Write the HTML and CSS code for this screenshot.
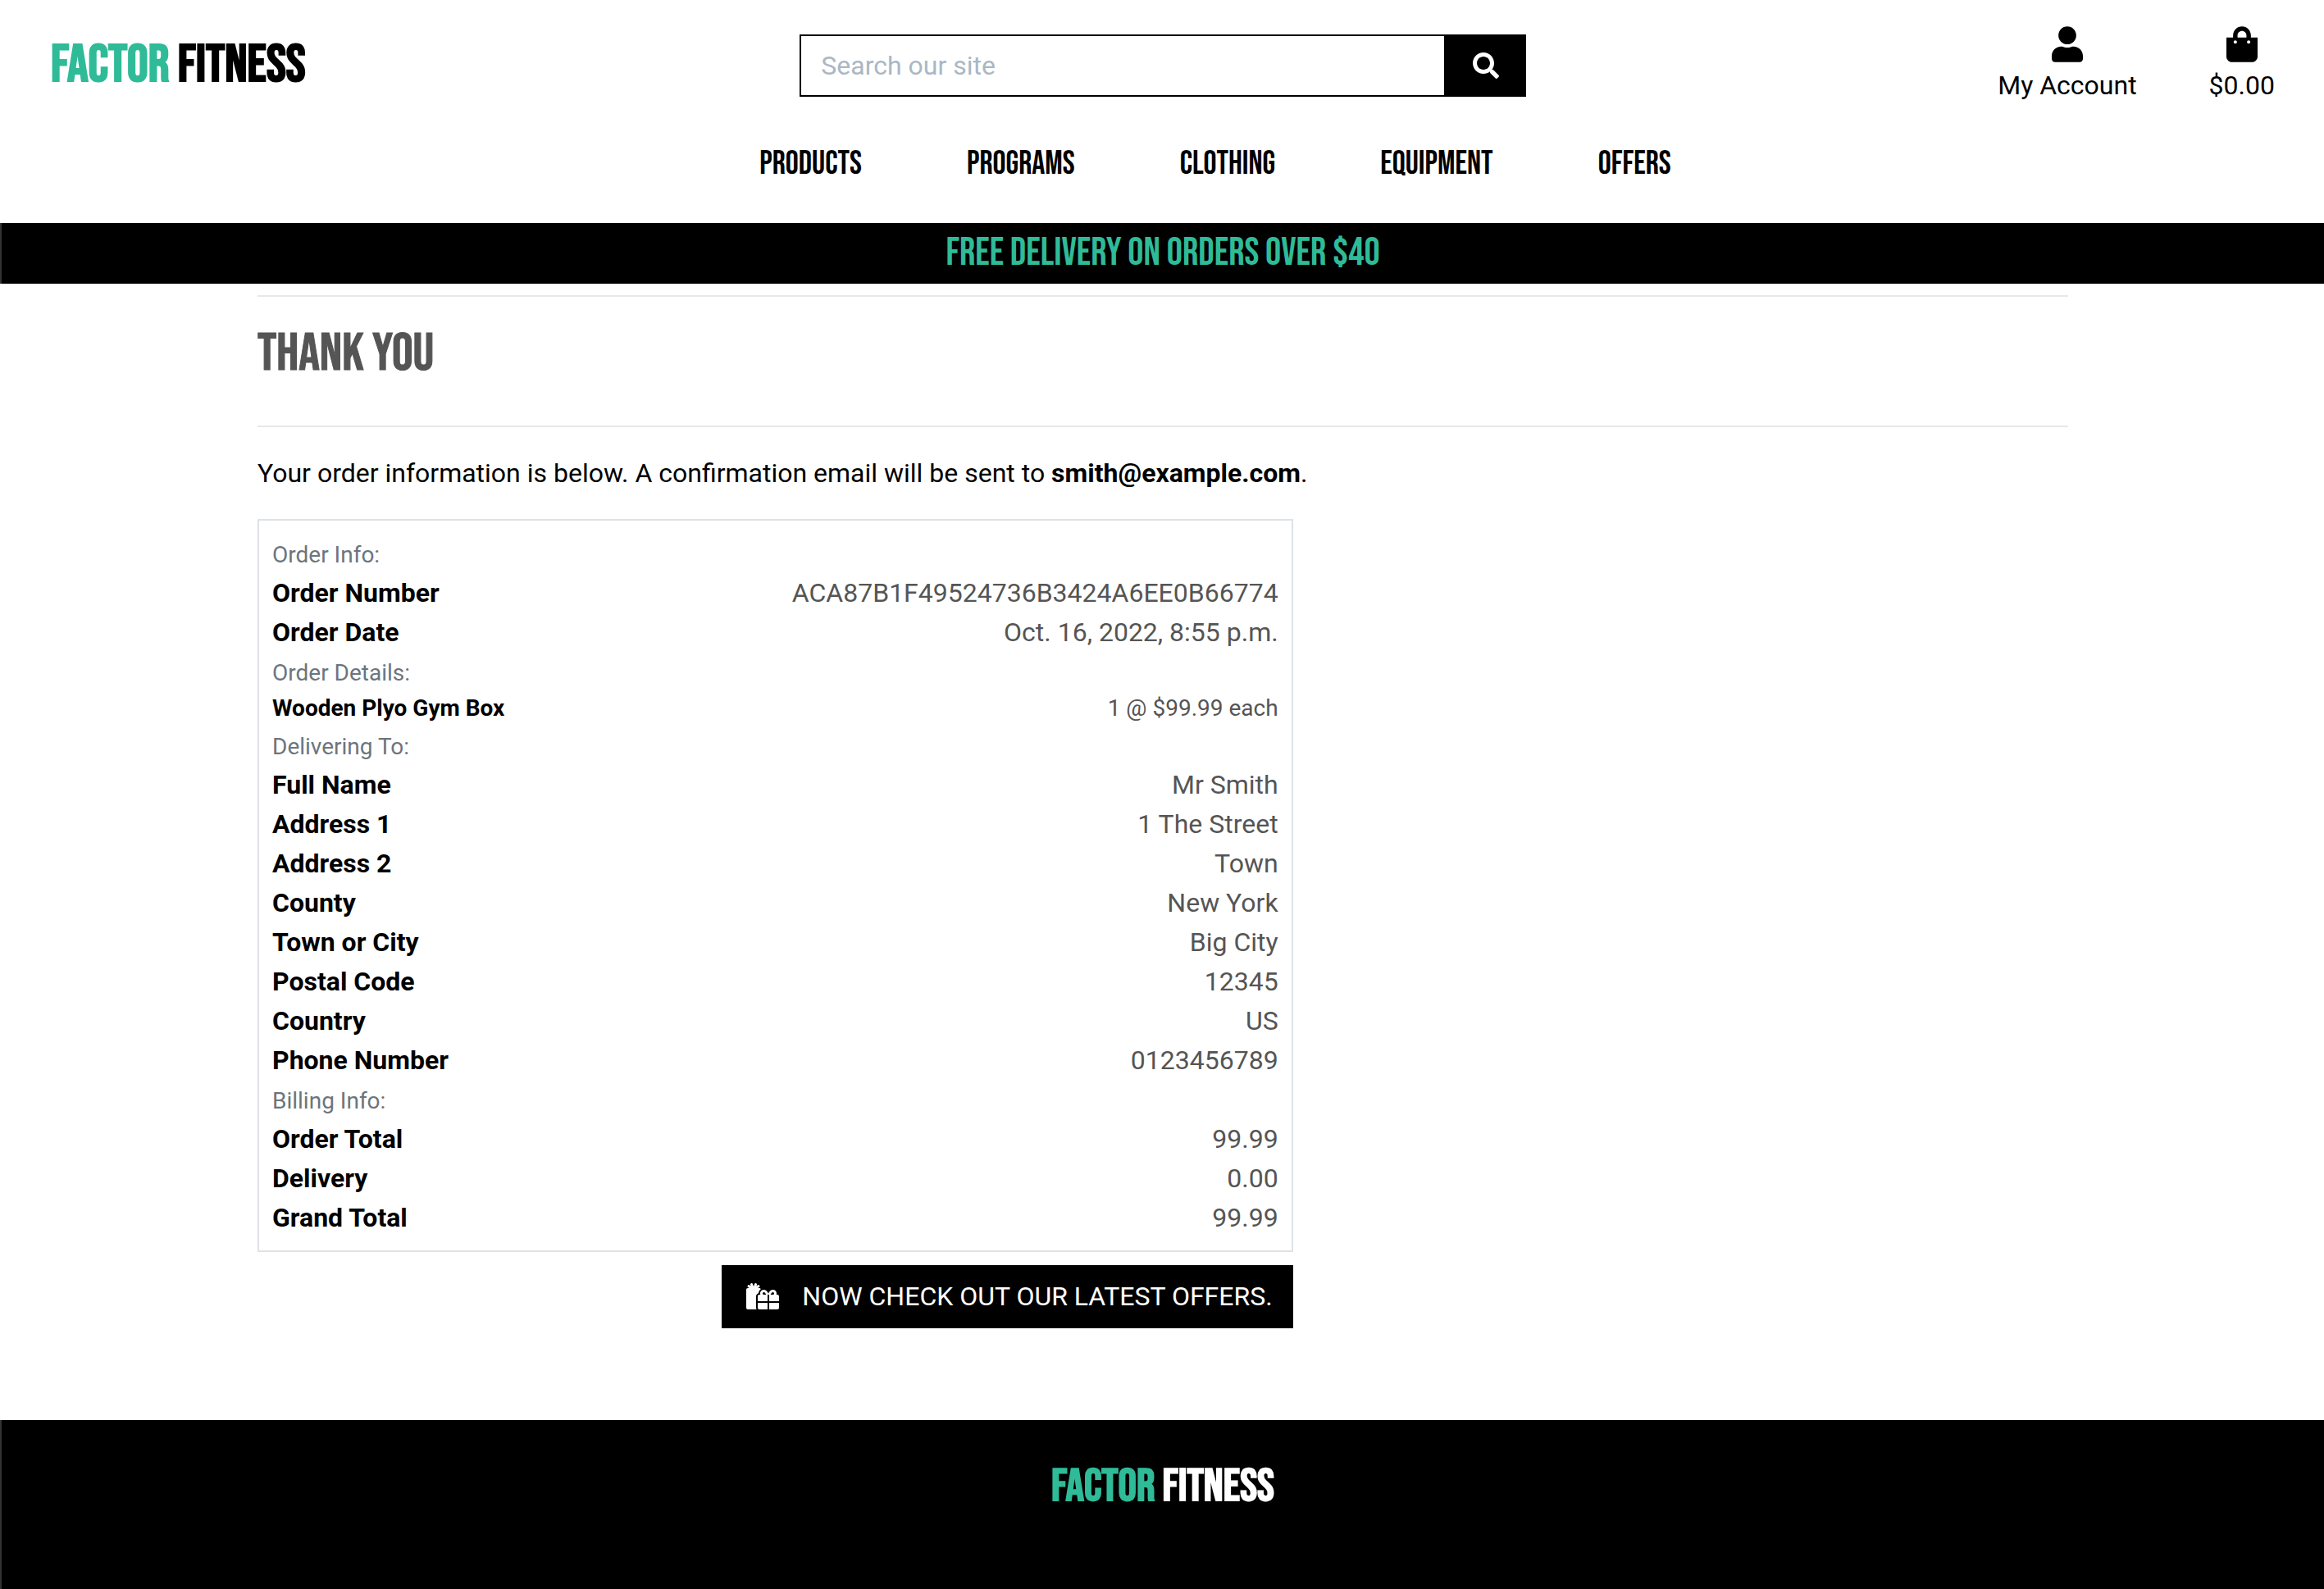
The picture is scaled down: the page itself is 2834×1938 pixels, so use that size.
FILE: index.html
```html
<!DOCTYPE html>
<html lang="en">
<head>
<meta charset="utf-8">
<meta name="viewport" content="width=device-width, initial-scale=1">
<title>Thank You | Factor Fitness</title>
<link rel="stylesheet" href="styles.css">
</head>
<body>
<header class="site-header">
  <div class="topbar">
    <a class="logo" href="#"><span class="accent">Factor</span> Fitness</a>
    <form class="search" role="search">
      <input class="search-input" type="search" placeholder="Search our site" aria-label="Search our site">
      <button class="search-button" type="submit" aria-label="Search">
        <svg class="icon-search" viewBox="0 0 512 512" aria-hidden="true"><path d="M505 442.700L405.300 343c-4.500-4.500-10.600-7-17-7H372c27.600-35.300 44-79.700 44-128C416 93.100 322.900 0 208 0S0 93.100 0 208s93.100 208 208 208c48.300 0 92.700-16.400 128-44v16.300c0 6.400 2.500 12.500 7 17l99.700 99.700c9.400 9.400 24.600 9.400 33.900 0l28.300-28.300c9.400-9.400 9.400-24.600.1-34zM208 336c-70.700 0-128-57.200-128-128 0-70.700 57.200-128 128-128 70.700 0 128 57.200 128 128 0 70.700-57.200 128-128 128z"/></svg>
      </button>
    </form>
    <div class="user-links">
      <a class="user-link" href="#">
        <svg class="icon-user" viewBox="0 0 448 512" aria-hidden="true"><path d="M224 256c70.700 0 128-57.300 128-128S294.700 0 224 0 96 57.300 96 128s57.300 128 128 128zm89.600 32h-16.700c-22.200 10.200-46.900 16-72.900 16s-50.600-5.800-72.900-16h-16.700C60.200 288 0 348.200 0 422.400V464c0 26.500 21.500 48 48 48h352c26.500 0 48-21.500 48-48v-41.600c0-74.200-60.200-134.400-134.400-134.400z"/></svg>
        My Account
      </a>
      <a class="user-link" href="#">
        <svg class="icon-user" viewBox="0 0 448 512" aria-hidden="true"><path d="M352 160v-32C352 57.420 294.579 0 224 0 153.420 0 96 57.420 96 128v32H0v272c0 44.183 35.817 80 80 80h288c44.183 0 80-35.817 80-80V160h-96zm-192-32c0-35.290 28.710-64 64-64s64 28.710 64 64v32H160v-32zm160 120c-13.255 0-24-10.745-24-24s10.745-24 24-24 24 10.745 24 24-10.745 24-24 24zm-192 0c-13.255 0-24-10.745-24-24s10.745-24 24-24 24 10.745 24 24-10.745 24-24 24z"/></svg>
        $0.00
      </a>
    </div>
  </div>
  <nav class="main-nav">
    <a href="#">Products</a>
    <a href="#">Programs</a>
    <a href="#">Clothing</a>
    <a href="#">Equipment</a>
    <a href="#">Offers</a>
  </nav>
</header>

<div class="banner">Free delivery on orders over $40</div>

<main class="container">
  <h1 class="page-title">Thank You</h1>
  <p class="intro">Your order information is below. A confirmation email will be sent to <strong>smith@example.com</strong>.</p>
  <div class="order">
    <div class="order-box">
      <h2 class="group"><small>Order Info:</small></h2>
      <dl class="rows">
        <dt>Order Number</dt><dd>ACA87B1F49524736B3424A6EE0B66774</dd>
        <dt>Order Date</dt><dd>Oct. 16, 2022, 8:55 p.m.</dd>
      </dl>
      <h2 class="group"><small>Order Details:</small></h2>
      <dl class="rows rows-small">
        <dt>Wooden Plyo Gym Box</dt><dd>1 @ $99.99 each</dd>
      </dl>
      <h2 class="group"><small>Delivering To:</small></h2>
      <dl class="rows">
        <dt>Full Name</dt><dd>Mr Smith</dd>
        <dt>Address 1</dt><dd>1 The Street</dd>
        <dt>Address 2</dt><dd>Town</dd>
        <dt>County</dt><dd>New York</dd>
        <dt>Town or City</dt><dd>Big City</dd>
        <dt>Postal Code</dt><dd>12345</dd>
        <dt>Country</dt><dd>US</dd>
        <dt>Phone Number</dt><dd>0123456789</dd>
      </dl>
      <h2 class="group"><small>Billing Info:</small></h2>
      <dl class="rows">
        <dt>Order Total</dt><dd>99.99</dd>
        <dt>Delivery</dt><dd>0.00</dd>
        <dt>Grand Total</dt><dd>99.99</dd>
      </dl>
    </div>
    <a class="offers-button" href="#">
      <svg class="icon-gifts" viewBox="0 0 640 512" aria-hidden="true"><path d="M240.600 194.100c1.900-30.800 17.300-61.200 44-79.800C279.400 103.500 268.700 96 256 96h-29.400l30.700-22c7.200-5.100 8.900-15.100 3.700-22.300l-9.300-13c-5.100-7.200-15.100-8.900-22.300-3.700l-32 22.900 11.500-30.600c3.100-8.300-1.100-17.500-9.400-20.600l-15-5.600c-8.300-3.100-17.500 1.100-20.600 9.400l-19.900 53-19.900-53.100C121 2.100 111.800-2.100 103.500 1l-15 5.600C80.200 9.700 76 19 79.200 27.200l11.500 30.600L58.600 35c-7.200-5.100-17.200-3.500-22.300 3.700l-9.300 13c-5.100 7.200-3.500 17.200 3.700 22.300l30.700 22H32c-17.700 0-32 14.300-32 32v352c0 17.700 14.300 32 32 32h168.900c-5.500-9.500-8.900-20.300-8.900-32V256c0-29.900 20.800-55 48.600-61.900zM224 480c0 17.700 14.300 32 32 32h160V384H224v96zm224 32h160c17.700 0 32-14.300 32-32v-96H448v128zm160-288h-20.400c2.600-7.600 4.400-15.500 4.400-23.800 0-35.500-27-72.200-72.100-72.200-48.100 0-75.900 47.700-87.900 75.300-12.100-27.600-39.900-75.300-87.900-75.300-45.100 0-72.100 36.700-72.100 72.200 0 8.300 1.700 16.200 4.400 23.800H256c-17.700 0-32 14.300-32 32v96h192V224h15.300l.7-.2.7.2H448v128h192v-96c0-17.700-14.300-32-32-32zm-272 0c-2.700-1.400-5.100-3-7.200-4.800-7.300-6.400-8.800-13.800-8.800-19 0-9.700 6.400-24.200 24.100-24.200 18.700 0 35.600 27.400 44.500 48H336zm199.200-4.800c-2.100 1.800-4.500 3.400-7.200 4.800h-52.600c8.800-20.300 25.800-48 44.500-48 17.700 0 24.100 14.500 24.100 24.200 0 5.200-1.500 12.600-8.800 19z"/></svg>
      NOW CHECK OUT OUR LATEST OFFERS.
    </a>
  </div>
</main>

<footer class="site-footer">
  <a class="logo logo-footer" href="#"><span class="accent">Factor</span> Fitness</a>
</footer>
</body>
</html>
```
FILE: styles.css
```css
* {
  box-sizing: border-box;
  margin: 0;
}

body {
  display: flex;
  flex-direction: column;
  min-height: 100vh;
  background: #fff;
  color: #000;
  font: 32px/48px Roboto, sans-serif;
}

a {
  color: inherit;
  text-decoration: none;
}

svg {
  display: block;
  fill: currentColor;
}

.accent {
  color: #2fbb98;
}

/* Header */
.site-header {
  padding: 32px 0 42px;
}

.topbar {
  display: grid;
  grid-template-columns: repeat(3, 1fr);
  align-items: center;
  padding: 0 60px 0 62px;
  column-gap: 28px;
}

.logo {
  font: bold 64px/76px "Bebas Neue", "Roboto Condensed", sans-serif;
}

.search {
  display: flex;
  height: 76px;
}

.search-input {
  flex: 1;
  min-width: 0;
  padding: 0 24px;
  border: 2px solid #000;
  border-radius: 0;
  background: #fff;
  color: #000;
  font: inherit;
}

.search-input::placeholder {
  color: #aab7c4;
  opacity: 1;
}

.search-button {
  display: flex;
  align-items: center;
  justify-content: center;
  width: 98px;
  padding: 0;
  border: 0;
  background: #000;
  color: #fff;
}

.icon-search {
  width: 32px;
  height: 32px;
}

.user-links {
  display: flex;
  justify-content: flex-end;
  gap: 88px;
}

.user-link {
  display: flex;
  flex-direction: column;
  align-items: center;
  gap: 4px;
}

.icon-user {
  width: 38px;
  height: 44px;
}

.main-nav {
  display: flex;
  justify-content: center;
  gap: 128px;
  margin-top: 42px;
  padding-left: 130px;
  font: 40px/60px "Bebas Neue", "Roboto Condensed", sans-serif;
}

.banner {
  padding: 8px 0;
  border-left: 2px solid #333;
  background: #000;
  color: #2fbb98;
  font: 48px/58px "Bebas Neue", "Roboto Condensed", sans-serif;
  text-align: center;
}

/* Order confirmation */
.container {
  flex: 1;
  margin: 0 312px 0 314px;
  padding: 14px 0 111px;
}

.page-title {
  padding: 22px 0 39px;
  border: solid #e8e8e8;
  border-width: 2px 0;
  color: #555;
  font: 64px/96px "Bebas Neue", "Roboto Condensed", sans-serif;
  -webkit-text-stroke: 1px currentColor;
}

.intro {
  margin: 32px 0;
}

.order {
  display: flex;
  flex-direction: column;
  align-items: flex-end;
  gap: 16px;
  width: calc(58% - 18px);
}

.order-box {
  align-self: stretch;
  padding: 16px;
  border: 2px solid #dee2e6;
}

.group {
  color: #6c757d;
  font: inherit;
}

.group small {
  font-size: 28px;
  line-height: 28px;
}

.rows {
  display: grid;
  grid-template-columns: auto 1fr;
}

.rows-small {
  font-size: 28px;
  line-height: 42px;
}

dt {
  font-weight: 700;
}

dd {
  color: #555;
  text-align: right;
}

.offers-button {
  display: flex;
  align-items: center;
  gap: 28px;
  padding: 14px 25px 15px 30px;
  background: #000;
  color: #fff;
}

.icon-gifts {
  width: 40px;
  height: 32px;
}

/* Footer */
.site-footer {
  padding: 43px 0 85px;
  border-left: 2px solid #333;
  background: #000;
  color: #fff;
  text-align: center;
}

.logo-footer {
  display: block;
  font-size: 56px;
  line-height: 78px;
}
```
